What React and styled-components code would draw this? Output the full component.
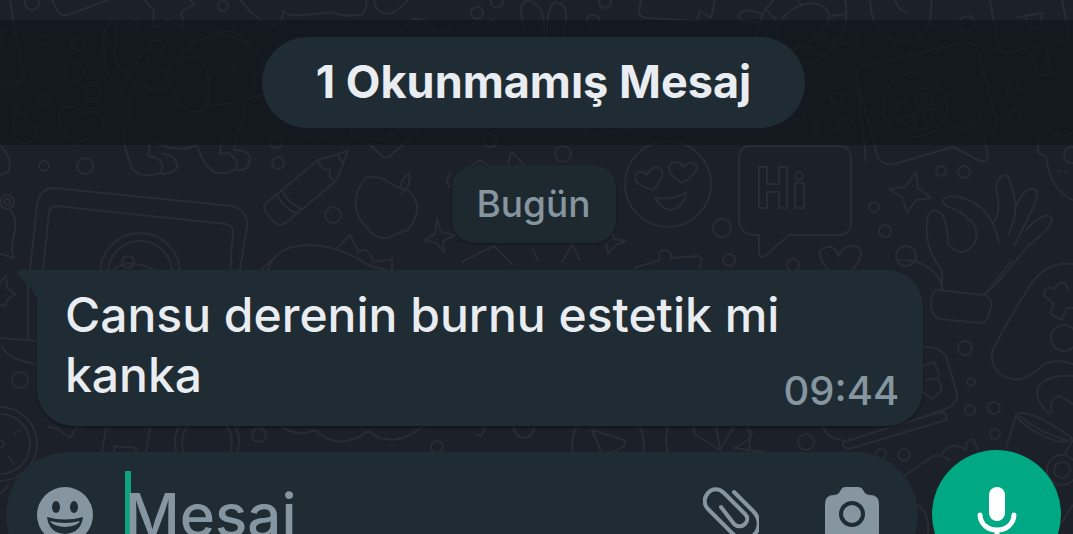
import styled, { createGlobalStyle } from 'styled-components';

const GlobalStyle = createGlobalStyle`
    * {
        box-sizing: border-box;
    }
    body {
        margin: 0;
        background-color: #1c2028;
        font-family: Inter, "Liberation Sans", sans-serif;
    }
`;

const Page = styled.div`
    position: relative;
    display: flex;
    flex-direction: column;
    height: 100vh;
    padding-top: 20px;
    overflow: hidden;
`;
const Wallpaper = styled.svg`
    position: absolute;
    inset: 0;
    width: 100%;
    height: 100%;
    fill: none;
    stroke: #292c33;
    stroke-width: 2;
    stroke-linecap: round;
    stroke-linejoin: round;
`;
const UnreadBand = styled.div`
    position: relative;
    display: flex;
    justify-content: center;
    flex-shrink: 0;
    padding: 17px 12px 17px 6px;
    background-color: rgba(16, 22, 28, 0.68);
`;
const UnreadPill = styled.div`
    padding: 17px 54px 18px;
    border-radius: 46px;
    background-color: #202c33;
    color: #e9edf1;
    font-size: 45px;
    font-weight: 700;
    line-height: 56px;
`;
const Thread = styled.main`
    position: relative;
    display: flex;
    flex-direction: column;
    flex-shrink: 0;
    padding: 20px 12px 26px 6px;
`;
const Day = styled.div`
    align-self: center;
    padding: 15px 25px;
    border-radius: 22px;
    background-color: #1e292f;
    box-shadow: 0 1px 2px rgba(10, 14, 18, 0.5);
    color: #8696a0;
    font-size: 37px;
    font-weight: 500;
    line-height: 48px;
`;
const Bubble = styled.div`
    position: relative;
    display: flex;
    justify-content: space-between;
    align-items: flex-end;
    width: 84%;
    margin: 27px 0 0 31px;
    padding: 15px 24px 21px 28px;
    border-radius: 0 36px 36px 36px;
    background-color: #202c33;
    box-shadow: 0 2px 2px rgba(10, 14, 18, 0.5);
`;
const Tail = styled.svg`
    position: absolute;
    top: 0;
    left: -20px;
    width: 21px;
    height: 32px;
    fill: #202c33;
`;
const Message = styled.p`
    flex: 1;
    margin: 0;
    color: #e9edf1;
    font-size: 48px;
    font-weight: 500;
    line-height: 60px;
`;
const Time = styled.time`
    flex-shrink: 0;
    margin-left: -24px;
    color: #8696a0;
    font-size: 40px;
    font-weight: 500;
    line-height: 28px;
`;
const Footer = styled.footer`
    position: relative;
    display: flex;
    align-items: center;
    flex-shrink: 0;
    gap: 14px;
    padding: 0 12px 0 6px;
    margin-top: -2px;
`;
const Composer = styled.div`
    display: flex;
    align-items: center;
    flex: 1;
    height: 126px;
    padding: 0 38px 0 31px;
    border-radius: 63px;
    background-color: #202c33;
`;
const IconButton = styled.button`
    display: block;
    flex-shrink: 0;
    padding: 0;
    margin-left: ${props => props.$gap || 0}px;
    border: none;
    background: none;
    color: #8696a0;
    cursor: pointer;
    svg {
        display: block;
        width: 56px;
        height: 56px;
    }
`;
const Field = styled.label`
    position: relative;
    display: flex;
    flex: 1;
    min-width: 0;
    margin-left: 32px;
`;
const Caret = styled.span`
    position: absolute;
    top: 0;
    left: 0;
    width: 6px;
    height: 88px;
    background-color: #0fa37f;
`;
const MessageInput = styled.input`
    position: relative;
    width: 100%;
    height: 88px;
    padding: 0;
    border: none;
    outline: none;
    background: none;
    color: #e9edf1;
    font-family: inherit;
    font-size: 60px;
    font-weight: 500;
    &::placeholder {
        color: #8696a0;
        opacity: 1;
    }
`;
const MicButton = styled.button`
    display: flex;
    align-items: center;
    justify-content: center;
    flex-shrink: 0;
    width: 129px;
    height: 129px;
    padding: 0;
    border: none;
    border-radius: 50%;
    background-color: #00a884;
    color: #ffffff;
    cursor: pointer;
    svg {
        width: 42px;
        height: 56px;
    }
`;

// [cx, cy, r]
const dots = [
    [32, 3, 7], [223, 6, 5], [44, 40, 5], [78, 44, 7], [74, 72, 10], [92, 92, 7], [44, 100, 6],
    [157, 47, 7], [142, 62, 6], [135, 25, 5], [276, 142, 6], [316, 135, 5], [44, 166, 5], [85, 166, 8],
    [278, 163, 6], [333, 215, 8], [7, 202, 7], [7, 202, 3], [477, 13, 6], [492, 24, 4], [593, 22, 7],
    [497, 2, 6], [605, 2, 6], [490, 140, 7], [563, 154, 8], [837, 98, 6], [846, 126, 8], [816, 128, 5],
    [798, 114, 6], [967, 24, 8], [1015, 115, 5], [941, 171, 5], [964, 172, 6], [874, 207, 5],
    [885, 231, 6], [722, 228, 9], [729, 260, 6], [793, 265, 6], [906, 256, 10], [20, 380, 8],
    [259, 435, 7], [437, 447, 6], [965, 348, 7], [971, 382, 4], [970, 410, 5], [994, 408, 6],
    [995, 434, 5], [806, 442, 8], [881, 454, 5], [904, 455, 6], [1064, 338, 13], [1062, 470, 8],
    [1062, 470, 15], [234, 67, 2], [140, 273, 40], [140, 273, 32], [128, 262, 6], [0, 444, 37],
    [0, 444, 30], [0, 444, 4], [207, 442, 32], [207, 442, 25], [608, 444, 36], [708, 440, 42],
    [668, 184, 43], [799, 176, 4], [915, 105, 32], [924, 97, 9], [924, 97, 4], [524, 428, 10],
    [1072, 155, 8],
];

const doodles = [
    // top edge: box, star, cloud
    'M52 0L58 12Q62 17 70 14L108 0',
    'M145 0L154 11L153 28L168 20L184 28L181 12L195 4L190 0',
    'M240 0Q262 26 274 25Q284 22 283 11L290 15Q310 16 330 12Q350 18 362 14Q368 8 366 0',
    'M374 0Q376 16 392 13Q402 8 408 0',
    'M10 0Q18 50 25 80L0 89M25 80L0 84M0 30Q6 38 0 46',
    'M523 37L521 8Q524 -2 532 2Q546 8 544 36M547 37Q546 6 556 2Q568 4 566 20L564 37',
    'M641 0L639 12Q640 18 648 18L697 21L700 11L711 18L715 0',
    // drop and heart
    'M15 107Q10 138 20 143Q34 146 35 130Q30 118 15 107Z',
    'M76 145L60 124Q55 108 68 107Q80 107 82 115Q90 109 99 113Q108 120 100 131Z',
    // dog
    'M112 22Q100 25 105 60Q108 85 130 100Q132 115 124 127Q122 145 133 170Q142 178 160 173Q166 165 157 158L148 156L150 140L163 146Q180 152 197 145Q203 165 214 172Q228 176 236 168Q240 160 228 153L220 154L221 140',
    'M112 22Q117 24 115 36Q112 60 122 72Q135 90 167 90M163 154Q178 156 177 168Q170 176 160 173',
    'M177 60Q190 36 222 35Q250 38 265 62M214 33Q236 26 247 42',
    'M175 62Q195 52 205 66Q212 85 207 107Q198 116 185 108Q166 85 166 72Z',
    'M207 107Q240 102 262 95M244 102Q244 125 236 135L234 150Q250 150 250 160Q248 172 236 170M250 70L257 74L250 80L256 86',
    // left side
    'M0 145Q14 160 8 172L0 175M10 210Q18 218 14 235Q10 248 14 258L0 254',
    // picture frame
    'M30 270L37 205Q40 188 54 188L232 206Q248 210 247 226L240 270M43 270L49 212Q50 206 56 206L226 224Q234 226 233 232L230 270',
    // pencil
    'M264 205L318 160L348 151L336 181L287 222Q280 228 273 221L265 211ZM318 160Q320 170 330 170Q328 180 336 181M277 195Q285 210 297 213M282 190Q288 204 302 209M338 154Q338 160 344 162',
    // dinosaur
    'M268 270Q275 245 310 245Q340 246 370 266L395 272M337 248L350 235L358 250M358 252Q368 245 374 262L392 259V270',
    // apple
    'M394 186Q380 174 366 178Q354 190 356 210Q360 222 366 226Q374 240 388 238Q400 232 408 230Q418 218 417 205Q412 188 400 188ZM401 190Q400 178 409 174Q412 186 401 194',
    // diamond shape around the pill
    'M390 40L412 20Q420 16 428 24L436 32L448 30L456 40M350 127L352 138L380 139L404 128M368 143L382 156Q387 160 392 154L422 128',
    'M585 127L588 136L640 127',
    // stars
    'M437 219L441 232L455 235L443 241L444 252L437 243L424 240L435 234Z',
    'M612 232L614 239L626 241L616 245L608 254L606 244M508 165L511 152L524 164M472 166Q480 156 488 166M450 187Q444 182 450 174',
    'M916 172L918 188L931 198L916 200L907 213L903 198L889 189L905 187Z',
    'M0 283L6 275L7 288L15 294L7 300L5 306L0 305',
    'M462 262L494 246L512 264M562 262L572 244L580 260M533 250L538 260',
    // turtle
    'M756 38Q762 0 790 -10M845 0Q852 30 826 53Q815 64 804 64M778 30Q784 6 812 3Q832 6 828 20Q818 44 790 49Q778 46 778 30M760 22Q740 24 738 16Q744 6 762 14M768 12L778 22M798 0L802 6M830 16L847 14M820 34L834 43M812 48L820 56M842 32Q858 30 860 38Q854 46 838 42',
    // balloon and ice pop
    'M870 0Q872 40 904 42Q934 40 931 0M895 0Q898 10 906 12',
    'M990 0L998 46Q1000 54 1010 52L1066 40Q1072 38 1068 30L1062 0M1018 17L1043 13M1026 19Q1030 34 1040 26L1042 16M1031 52L1036 70Q1040 80 1050 73L1047 49',
    'M1019 75Q1002 86 1008 96Q1018 96 1019 75Z',
    // winking message
    'M866 161L857 78Q854 70 864 66L966 42Q974 42 978 50L996 120Q998 130 990 134L984 138L988 156Q988 162 980 161L953 147L894 164Q884 166 878 158L856 76M896 106Q902 98 909 105M900 118L934 108Q934 126 922 130Q908 130 900 118M916 126L913 116M926 124L924 113M958 125L964 132L972 118M972 130L981 114',
    // heart eyes
    'M653 190Q630 184 637 173Q644 170 647 175Q652 164 661 169Q666 176 653 190ZM682 183Q662 170 672 163Q680 160 683 167Q690 160 696 165Q700 172 682 183ZM655 198Q676 200 686 192Q684 208 670 210Q660 208 655 198Z',
    // speech bubble
    'M750 146H838Q851 146 851 160V222Q851 235 838 235H789L765 256Q759 259 759 252V235H752Q739 233 739 218V160Q739 146 750 146Z',
    'M759 167H767V184H779V167H787V208H779V192H767V208H759ZM795 183H804V208H795Z',
    // small heart and gift by the bubble
    'M828 270Q814 252 824 248Q836 244 838 256Q846 242 858 247Q866 254 853 269M634 268L660 260Q656 250 666 250Q672 252 671 258L698 256Q704 258 700 268',
    // bear
    'M1073 200Q1050 190 1046 156Q1036 156 1038 140Q1042 126 1056 134Q1060 140 1073 132M1058 171H1060M1066 172H1067',
    // ok hand
    'M942 270Q922 246 928 216Q932 206 942 214Q948 226 948 244Q962 260 974 244Q980 232 972 222Q960 210 946 206Q938 198 952 196Q990 200 999 242M994 222Q1002 210 996 190Q998 172 1008 176Q1018 200 1014 220L1008 236M1016 206Q1026 184 1036 190Q1040 196 1026 222L1014 246M1026 230Q1044 210 1052 218Q1052 228 1030 244L998 282L984 295M942 270V292',
    'M936 290L984 295Q994 298 990 310Q988 322 982 323L940 319Q930 316 931 302Q932 292 936 290Z',
    // game pad
    'M1073 264Q1044 260 1026 292Q1002 330 992 352Q990 374 1012 379Q1026 382 1044 364Q1058 358 1073 364M1054 289L1060 282L1066 284L1068 290M1054 289Q1044 284 1044 296L1054 304L1050 314L1062 320L1066 308L1073 308',
    // watch and strap
    'M920 348Q936 344 946 356L957 394Q958 404 946 409L920 418M922 366L934 362L939 374M926 380L938 378L942 390L932 399L922 392M843 442L940 412Q948 412 946 420L852 448Q842 450 843 442ZM823 426Q826 438 842 440',
    // cup
    'M1016 414Q1030 408 1072 438Q1064 448 1036 432Q1020 424 1016 414ZM1021 417Q1042 434 1066 440M1016 416L1006 448M1050 414Q1034 402 1038 388Q1046 374 1073 376M1052 412Q1048 398 1060 396L1073 404M1073 440L1064 455',
    // strip between the message and the composer
    'M28 283V338M0 338L37 341M2 346Q8 360 37 364M49 427L58 429L70 438L76 428L83 425M106 428L102 452M150 428L146 452M114 452L115 446L136 448V452M14 434L20 430M8 456L14 464M0 494L8 486',
    'M282 427Q300 438 314 430Q334 446 350 440Q360 438 368 431Q386 446 410 435L424 426M476 434Q484 440 484 426M592 430L624 440Q628 444 618 450L602 454ZM694 428Q692 434 704 440L720 450M716 426L720 450L734 426M748 430Q760 436 734 448L764 452',
    'M904 476L930 458Q938 452 950 460M942 454Q952 440 966 450Q966 438 974 440L978 450M917 505Q930 512 928 534M1073 505L1062 522',
    'M900 260Q936 260 943 290M1012 260L984 295M114 269Q128 258 152 269M232 260L230 269M272 260L262 269',
];

const EmojiIcon = () => (
    <svg viewBox="0 0 56 56" fill="currentColor" aria-hidden="true">
        <circle cx="28" cy="28" r="28" />
        <g fill="#202c33">
            <ellipse cx="19" cy="20" rx="4" ry="6" />
            <ellipse cx="37" cy="20" rx="4" ry="6" />
            <path d="M10 30Q28 35 46 30Q44 46 28 47Q12 46 10 30Z" />
        </g>
        <path d="M13 34Q28 38 43 34Q41 39 28 40Q15 39 13 34Z" />
    </svg>
);

const ClipIcon = () => (
    <svg viewBox="0 0 56 56" fill="none" stroke="currentColor" strokeWidth="4" strokeLinecap="round" aria-hidden="true">
        <path d="M31 5L50 24C58 32 57 42 51 48C45 54 36 53 30 47L5 22C0 17 1 10 5 6C9 1 16 1 21 6L42 27C45 30 45 34 42 37C39 40 34 40 31 37L18 20" />
    </svg>
);

const CameraIcon = () => (
    <svg viewBox="0 0 56 56" fill="currentColor" aria-hidden="true">
        <path d="M21 0H34C38 0 39 3 41 6Q43 8 46 8Q55 8 55 17V45Q55 54 46 54H10Q1 54 1 45V17Q1 8 10 8Q13 8 15 6C17 3 18 0 21 0Z" />
        <circle cx="28" cy="27" r="11" fill="none" stroke="#202c33" strokeWidth="4" />
    </svg>
);

const MicIcon = () => (
    <svg viewBox="0 0 42 56" fill="none" stroke="currentColor" strokeWidth="5" strokeLinecap="round" aria-hidden="true">
        <rect x="13" y="0" width="16" height="34" rx="8" fill="currentColor" stroke="none" />
        <path d="M4 28C5 48 37 48 38 28M21 44V53" />
    </svg>
);

const App = () => {
    return (
        <Page>
            <GlobalStyle />
            <Wallpaper viewBox="0 0 1073 534" preserveAspectRatio="xMinYMin slice" aria-hidden="true">
                {dots.map(([cx, cy, r], i) => <circle key={i} cx={cx} cy={cy} r={r} />)}
                {doodles.map((d, i) => <path key={i} d={d} />)}
            </Wallpaper>
            <UnreadBand>
                <UnreadPill>1 Okunmamış Mesaj</UnreadPill>
            </UnreadBand>
            <Thread>
                <Day>Bugün</Day>
                <Bubble>
                    <Tail viewBox="0 0 21 32" aria-hidden="true">
                        <path d="M3 0H21V32C20 27 18 24 15 20L1 5C-1 2 0 0 3 0Z" />
                    </Tail>
                    <Message>Cansu derenin burnu estetik mi kanka</Message>
                    <Time>09:44</Time>
                </Bubble>
            </Thread>
            <Footer>
                <Composer>
                    <IconButton type="button" aria-label="Emoji">
                        <EmojiIcon />
                    </IconButton>
                    <Field>
                        <Caret />
                        <MessageInput type="text" placeholder="Mesaj" aria-label="Mesaj" />
                    </Field>
                    <IconButton type="button" aria-label="Dosya ekle">
                        <ClipIcon />
                    </IconButton>
                    <IconButton type="button" aria-label="Kamera" $gap={65}>
                        <CameraIcon />
                    </IconButton>
                </Composer>
                <MicButton type="button" aria-label="Sesli mesaj">
                    <MicIcon />
                </MicButton>
            </Footer>
        </Page>
    );
};

export default App;
